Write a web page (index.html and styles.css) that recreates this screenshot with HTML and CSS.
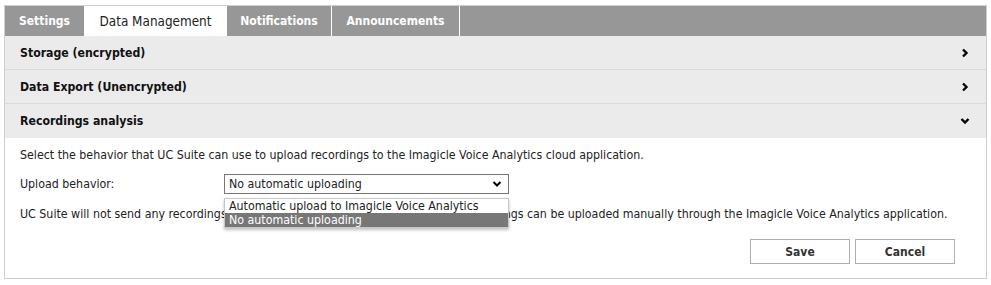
FILE: index.html
```html
<!DOCTYPE html>
<html>
<head>
<meta charset="utf-8">
<link rel="stylesheet" href="styles.css">
</head>
<body>
<div class="panel">
  <div class="tabs">
    <div class="tab">Settings</div>
    <div class="tab active">Data Management</div>
    <div class="tab">Notifications</div>
    <div class="tab">Announcements</div>
  </div>
  <div class="section">
    <span>Storage (encrypted)</span>
    <svg class="chev" width="10" height="10" viewBox="0 0 10 10"><path d="M3 1.5 L6.5 5 L3 8.5" fill="none" stroke="#000" stroke-width="2.4"/></svg>
  </div>
  <div class="section">
    <span>Data Export (Unencrypted)</span>
    <svg class="chev" width="10" height="10" viewBox="0 0 10 10"><path d="M3 1.5 L6.5 5 L3 8.5" fill="none" stroke="#000" stroke-width="2.4"/></svg>
  </div>
  <div class="section open">
    <span>Recordings analysis</span>
    <svg class="chev" width="10" height="10" viewBox="0 0 10 10"><path d="M1.5 3 L5 6.5 L8.5 3" fill="none" stroke="#000" stroke-width="2.4"/></svg>
  </div>
  <div class="content">
    <p class="line">Select the behavior that UC Suite can use to upload recordings to the Imagicle Voice Analytics cloud application.</p>
    <div class="field">
      <label class="label">Upload behavior:</label>
      <div class="select-wrap">
        <div class="select">
          <span>No automatic uploading</span>
          <svg width="10" height="8" viewBox="0 0 10 8"><path d="M1.5 2 L5 5.5 L8.5 2" fill="none" stroke="#000" stroke-width="2"/></svg>
        </div>
        <div class="options">
          <div class="option">Automatic upload to Imagicle Voice Analytics</div>
          <div class="option selected">No automatic uploading</div>
        </div>
      </div>
    </div>
    <p class="line">UC Suite will not send any recordings to Imagicle Voice Analytics automatically. Recordings can be uploaded manually through the Imagicle Voice Analytics application.</p>
    <div class="actions">
      <button class="btn">Save</button>
      <button class="btn">Cancel</button>
    </div>
  </div>
</div>
</body>
</html>
```

FILE: styles.css
```css
* { box-sizing: border-box; }
html, body { margin: 0; padding: 0; background: #fff; }
body {
  font-family: "DejaVu Sans Condensed", "DejaVu Sans", sans-serif;
  font-size: 12.3px;
  color: #222;
}
.panel {
  margin: 5px 4px 0 4px;
  border: 1px solid #cfcfcf;
  height: 274px;
}
.tabs {
  display: flex;
  background: #979797;
  height: 30px;
}
.tab {
  display: flex;
  align-items: center;
  justify-content: center;
  color: #fff;
  font-weight: bold;
  font-size: 12px;
  border-right: 1px solid #fff;
}
.tab:nth-child(1) { width: 79px; border-right: none; }
.tab:nth-child(2) { width: 143px; }
.tab:nth-child(3) { width: 105px; }
.tab:nth-child(4) { width: 128px; }
.tab.active {
  background: #fff;
  color: #222;
  font-weight: normal;
  font-size: 13.4px;
  border-right: none;
}
.section {
  display: flex;
  justify-content: space-between;
  align-items: center;
  height: 34px;
  background: #ebebeb;
  border-bottom: 1px solid #dadada;
  padding: 0 16px 0 15px;
  font-weight: bold;
  font-size: 12.2px;
  color: #111;
}
.section.open { border-bottom: none; }
.content {
  padding: 10px 15px 0 15px;
  position: relative;
}
.line { margin: 0; line-height: 14px; }
.field {
  display: flex;
  align-items: center;
  margin-top: 12px;
  margin-bottom: 13px;
}
.label { width: 204px; }
.select-wrap { position: relative; }
.select {
  width: 285px;
  height: 20px;
  border: 1px solid #767676;
  display: flex;
  align-items: center;
  justify-content: space-between;
  padding: 0 6px 0 4px;
  background: #fff;
}
.options {
  position: absolute;
  left: 0;
  top: 24px;
  width: 285px;
  background: #fff;
  border: 1px solid #c8c8c8;
  box-shadow: 0 2px 3px rgba(0,0,0,0.25);
  z-index: 2;
}
.option { height: 14px; line-height: 14px; padding: 0 4px; }
.option.selected { background: #777; color: #fff; }
.actions {
  display: flex;
  justify-content: flex-end;
  gap: 5px;
  margin-top: 18px;
  padding-right: 16px;
}
.btn {
  width: 100px;
  height: 25px;
  background: #fff;
  border: 1px solid #adadad;
  font-family: inherit;
  font-size: 12px;
  font-weight: bold;
  color: #333;
}
```
